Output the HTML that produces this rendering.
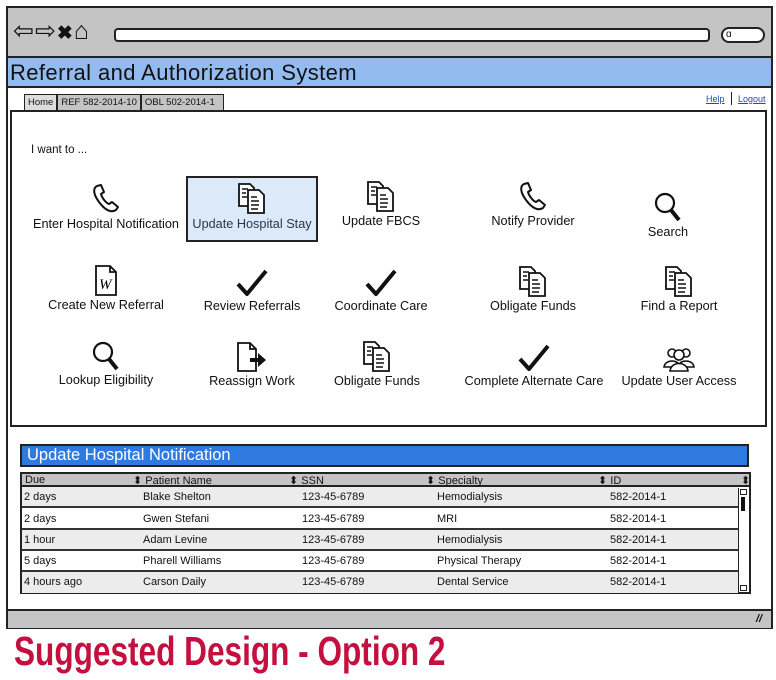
<!DOCTYPE html>
<html><head><meta charset="utf-8"><style>
*{margin:0;padding:0;box-sizing:border-box}
body{width:776px;height:680px;background:#fff;position:relative;font-family:"Liberation Sans",sans-serif;color:#111;overflow:hidden}
.a{position:absolute}
.lbl{position:absolute;font-size:12.7px;white-space:nowrap;transform:translateX(-50%)}
.ic{position:absolute;transform:translateX(-50%)}
.row{position:absolute;left:22px;width:716px;height:21px;border-bottom:2px solid #333;font-size:11px}
.row span{position:absolute;top:4px}
</style></head><body>
<svg width="0" height="0" style="position:absolute">
<defs>
<g id="phone"><path d="M6 4 C2 6 2 12 8 20 C14 28 20 31 25 28 L27 25 L21 20 L18 22 C15 21 11 16 10 12 L13 10 L10 3 Z" fill="none" stroke="#111" stroke-width="2" stroke-linejoin="round"/></g>
<g id="docs" fill="#fff" stroke="#111" stroke-width="1.8"><path d="M2 2 H13 L17 6 V24 H2 Z"/><path d="M11 8 H22 L27 13 V31 H11 Z"/><path d="M5 7h6M5 11h4M5 15h5M14 15h6M14 19h8M14 23h8M14 27h7" stroke-width="1.5"/></g>
<g id="check"><path d="M2 16 L11 26 L30 3" fill="none" stroke="#111" stroke-width="4" stroke-linejoin="round"/></g>
<g id="mag"><circle cx="12" cy="12" r="9" fill="none" stroke="#111" stroke-width="2.2"/><path d="M18 19 L26 29" stroke="#111" stroke-width="4"/></g>
<g id="wdoc"><path d="M2 2 H16 L22 8 V31 H2 Z M16 2 V8 H22" fill="#fff" stroke="#111" stroke-width="1.8"/><text x="5" y="25" font-family="Liberation Serif,serif" font-style="italic" font-size="15">W</text></g>
<g id="reas"><path d="M2 2 H14 L20 8 V30 H2 Z M14 2 V8 H20" fill="#fff" stroke="#111" stroke-width="1.8"/><path d="M14 17 H22 V12 L30 19 L22 26 V21 H14 Z" fill="#111"/></g>
<g id="users" fill="#fff" stroke="#111" stroke-width="1.6"><circle cx="10" cy="10" r="4"/><circle cx="24" cy="10" r="4"/><path d="M2 24 C3 16 17 16 18 24 Z"/><path d="M16 24 C17 16 31 16 32 24 Z"/><circle cx="17" cy="12" r="5"/><path d="M8 28 C9 18 25 18 26 28 Z"/></g>
</defs></svg>

<div class="a" style="left:6px;top:6px;width:767px;height:623px;border:2px solid #222;background:#fff"></div>
<div class="a" style="left:8px;top:8px;width:763px;height:50px;background:#c4c4c4;border-bottom:2px solid #222"></div>
<div class="a" style="left:13px;top:16px;font-size:25px;letter-spacing:1px">⇦⇨<b style="font-size:19px">✖</b>⌂</div>
<div class="a" style="left:114px;top:28px;width:596px;height:14px;background:#fff;border:2px solid #222;border-radius:4px"></div>
<div class="a" style="left:721px;top:27px;width:44px;height:16px;background:#fff;border:2px solid #222;border-radius:8px;font-size:10px;padding-left:3px;line-height:12px">ɑ</div>
<div class="a" style="left:8px;top:58px;width:763px;height:30px;background:#93bbef;border-bottom:2px solid #222;font-size:22px;letter-spacing:0.4px;padding:2px 0 0 2px">Referral and Authorization System</div>
<div class="a" style="left:24px;top:94px;height:16px;font-size:9.5px;display:flex">
<div style="border:1px solid #222;border-bottom:0;padding:2px 3px;background:#ddd">Home</div>
<div style="background:#c4c4c4;border:1px solid #222;border-bottom:0;padding:2px 3px">REF 582-2014-10</div>
<div style="background:#c4c4c4;border:1px solid #222;border-bottom:0;padding:2px 8px 2px 3px">OBL 502-2014-1</div>
</div>
<div class="a" style="left:706px;top:94px;font-size:9px;color:#1a4fb0;text-decoration:underline">Help</div>
<div class="a" style="left:731px;top:92px;width:1px;height:13px;background:#222"></div>
<div class="a" style="left:738px;top:94px;font-size:9px;color:#1a4fb0;text-decoration:underline">Logout</div>
<div class="a" style="left:10px;top:110px;width:757px;height:317px;border:2px solid #222"></div>
<div class="a" style="left:31px;top:144px;font-size:11.5px">I want to ...</div>
<div class="a" style="left:186px;top:176px;width:132px;height:66px;background:#dbe9f8;border:2px solid #222"></div>

<svg class="ic" style="left:106px;top:182px" width="30" height="32"><use href="#phone"/></svg>
<div class="lbl" style="left:106px;top:217px">Enter Hospital Notification</div>
<svg class="ic" style="left:252px;top:182px" width="30" height="33"><use href="#docs"/></svg>
<div class="lbl" style="left:252px;top:217px;color:#2a3550">Update Hospital Stay</div>
<svg class="ic" style="left:381px;top:180px" width="30" height="33"><use href="#docs"/></svg>
<div class="lbl" style="left:381px;top:214px">Update FBCS</div>
<svg class="ic" style="left:533px;top:180px" width="30" height="32"><use href="#phone"/></svg>
<div class="lbl" style="left:533px;top:214px">Notify Provider</div>
<svg class="ic" style="left:668px;top:191px" width="30" height="32"><use href="#mag"/></svg>
<div class="lbl" style="left:668px;top:225px">Search</div>

<svg class="ic" style="left:106px;top:264px" width="24" height="33"><use href="#wdoc"/></svg>
<div class="lbl" style="left:106px;top:298px">Create New Referral</div>
<svg class="ic" style="left:252px;top:268px" width="32" height="30"><use href="#check"/></svg>
<div class="lbl" style="left:252px;top:299px">Review Referrals</div>
<svg class="ic" style="left:381px;top:268px" width="32" height="30"><use href="#check"/></svg>
<div class="lbl" style="left:381px;top:299px">Coordinate Care</div>
<svg class="ic" style="left:533px;top:265px" width="30" height="33"><use href="#docs"/></svg>
<div class="lbl" style="left:533px;top:299px">Obligate Funds</div>
<svg class="ic" style="left:679px;top:265px" width="30" height="33"><use href="#docs"/></svg>
<div class="lbl" style="left:679px;top:299px">Find a Report</div>

<svg class="ic" style="left:106px;top:340px" width="30" height="32"><use href="#mag"/></svg>
<div class="lbl" style="left:106px;top:373px">Lookup Eligibility</div>
<svg class="ic" style="left:252px;top:341px" width="32" height="32"><use href="#reas"/></svg>
<div class="lbl" style="left:252px;top:374px">Reassign Work</div>
<svg class="ic" style="left:377px;top:340px" width="30" height="33"><use href="#docs"/></svg>
<div class="lbl" style="left:377px;top:374px">Obligate Funds</div>
<svg class="ic" style="left:534px;top:343px" width="32" height="30"><use href="#check"/></svg>
<div class="lbl" style="left:534px;top:374px">Complete Alternate Care</div>
<svg class="ic" style="left:679px;top:343px" width="34" height="30"><use href="#users"/></svg>
<div class="lbl" style="left:679px;top:374px">Update User Access</div>

<div class="a" style="left:20px;top:444px;width:729px;height:23px;background:#2e7ae0;border:2px solid #222;color:#fff;font-size:16.5px;padding:0 0 0 5px">Update Hospital Notification</div>
<div class="a" style="left:20px;top:472px;width:731px;height:122px;border:2px solid #222;background:#fff"></div>
<div class="a" style="left:22px;top:474px;width:727px;height:13px;background:#c4c4c4;border-bottom:2px solid #222;font-size:11px">
<span class="a" style="left:3px;top:0">Due</span><span class="a" style="left:111px;top:0">⬍ Patient Name</span><span class="a" style="left:267px;top:0">⬍ SSN</span><span class="a" style="left:404px;top:0">⬍ Specialty</span><span class="a" style="left:576px;top:0">⬍ ID</span><span class="a" style="left:719px;top:0">⬍</span></div>
<div class="row" style="top:487px;background:#ececec"><span style="left:2px">2 days</span><span style="left:121px">Blake Shelton</span><span style="left:280px">123-45-6789</span><span style="left:415px">Hemodialysis</span><span style="left:588px">582-2014-1</span></div>
<div class="row" style="top:509px"><span style="left:2px">2 days</span><span style="left:121px">Gwen Stefani</span><span style="left:280px">123-45-6789</span><span style="left:415px">MRI</span><span style="left:588px">582-2014-1</span></div>
<div class="row" style="top:530px;background:#ececec"><span style="left:2px">1 hour</span><span style="left:121px">Adam Levine</span><span style="left:280px">123-45-6789</span><span style="left:415px">Hemodialysis</span><span style="left:588px">582-2014-1</span></div>
<div class="row" style="top:551px"><span style="left:2px">5 days</span><span style="left:121px">Pharell Williams</span><span style="left:280px">123-45-6789</span><span style="left:415px">Physical Therapy</span><span style="left:588px">582-2014-1</span></div>
<div class="row" style="top:572px;background:#ececec;border-bottom:0"><span style="left:2px">4 hours ago</span><span style="left:121px">Carson Daily</span><span style="left:280px">123-45-6789</span><span style="left:415px">Dental Service</span><span style="left:588px">582-2014-1</span></div>
<div class="a" style="left:738px;top:488px;width:11px;height:104px;border-left:1px solid #222;background:#fff"></div>
<div class="a" style="left:741px;top:497px;width:4px;height:14px;background:#111"></div>
<div class="a" style="left:740px;top:489px;width:7px;height:6px;border:1px solid #222"></div>
<div class="a" style="left:740px;top:585px;width:7px;height:6px;border:1px solid #222"></div>

<div class="a" style="left:8px;top:609px;width:763px;height:19px;background:#c4c4c4;border-top:2px solid #222"></div>
<div class="a" style="left:756px;top:613px;font-size:11px;font-weight:bold;font-style:italic">//</div>

<div class="a" style="left:14px;top:628px;font-weight:bold;font-size:41px;color:#c4103f;transform:scaleX(0.77);transform-origin:left;white-space:nowrap">Suggested Design - Option 2</div>
</body></html>
